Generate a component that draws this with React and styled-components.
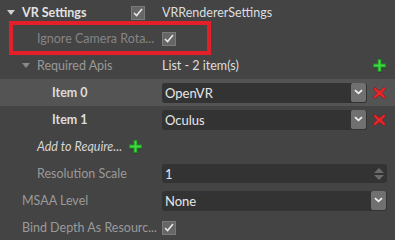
import React from 'react'
import styled, { createGlobalStyle } from 'styled-components'

const GlobalStyle = createGlobalStyle`
  html, body { margin: 0; padding: 0; background: #444444; }
  body { font-family: Lato, "Noto Sans", sans-serif; font-size: 12.5px; }
`

const Panel = styled.div`
  width: 395px;
  height: 240px;
  background: #444444;
  overflow: hidden;
  display: flex;
  flex-direction: column;
`

const Row = styled.div`
  position: relative;
  flex: none;
  height: ${p => p.$h || 27}px;
  display: grid;
  grid-template-columns: 162px 1fr;
  align-items: center;
  background: ${p => (p.$active ? '#545454' : 'transparent')};
`

const Label = styled.div`
  display: flex;
  align-items: center;
  padding-left: ${p => p.$indent}px;
  color: ${p => p.$color || '#9a9a9a'};
  font-weight: ${p => (p.$bold ? 700 : 400)};
  font-style: ${p => (p.$italic ? 'italic' : 'normal')};
  white-space: nowrap;
  gap: 6px;
`

const Caret = styled.span`
  width: 0;
  height: 0;
  border-left: 4px solid transparent;
  border-right: 4px solid transparent;
  border-top: 5px solid ${p => p.$color};
  margin-left: -15px;
  margin-right: 1px;
`

const Value = styled.div`
  display: flex;
  align-items: center;
  padding-right: 8px;
  gap: 5px;
  color: #dedede;
  white-space: nowrap;
`

const Text = styled.span`
  flex: 1;
`

const Field = styled.div`
  flex: 1;
  height: ${p => p.$h || 20}px;
  background: #333333;
  border-radius: 3px;
  display: flex;
  align-items: center;
  padding-left: 3px;
  color: #e6e6e6;
  font-size: 13px;
`

const FieldText = styled.span`
  flex: 1;
`

const DropButton = styled.div`
  width: 15px;
  align-self: stretch;
  margin: 0 1px 1px 0;
  background: #707070;
  border-radius: 2px;
  display: flex;
  align-items: center;
  justify-content: center;
`

const Spinner = styled.div`
  width: 12px;
  display: flex;
  flex-direction: column;
  align-items: center;
  gap: 2px;
  margin-right: 2px;
`

const Arrow = styled.span`
  width: 0;
  height: 0;
  border-left: 5px solid transparent;
  border-right: 5px solid transparent;
  ${p => (p.$up ? 'border-bottom' : 'border-top')}: 5px solid #6a6a6a;
`

const Check = styled.div`
  width: 12px;
  height: 12px;
  background: #666666;
  border: 1px solid #7a7a7a;
  display: flex;
  align-items: center;
  justify-content: center;
`

const HeaderCheck = styled(Check)`
  margin-left: -31px;
  margin-right: 12px;
`

const Highlight = styled.div`
  position: absolute;
  left: 9px;
  top: -4px;
  width: 202px;
  height: 34px;
  box-sizing: border-box;
  border: 4px solid #e3202a;
  pointer-events: none;
`

const Spacer = styled.span`
  flex: 1;
`

const CheckMark = () => (
  <svg width="10" height="9" viewBox="0 0 10 9">
    <path d="M1 5 L3.6 7.6 L9 1" fill="none" stroke="#e8e8e8" strokeWidth="1.6" />
  </svg>
)

const Chevron = () => (
  <svg width="9" height="6" viewBox="0 0 9 6">
    <path d="M1 1.2 L4.5 4.4 L8 1.2" fill="none" stroke="#f0f0f0" strokeWidth="1.8" />
  </svg>
)

const PlusIcon = () => (
  <svg width="15" height="16" viewBox="0 0 15 16">
    <path d="M5 2h5v4h4v5h-4v4h-5v-4h-4v-5h4z" fill="#1d4a1d" opacity="0.6" />
    <path d="M5.5 1h4v4.5h4.5v4h-4.5v4.5h-4v-4.5h-4.5v-4h4.5z" fill="#1f8c24" />
    <path d="M6.5 2h2v4.5h4.5v2h-4.5v4.5h-2v-4.5h-4.5v-2h4.5z" fill="#3fdc40" />
  </svg>
)

const CrossIcon = () => (
  <svg width="15" height="14" viewBox="0 0 15 14">
    <path d="M1 3 L3 1 L7.5 5 L12 1 L14 3 L10 7 L14 11 L12 13 L7.5 9 L3 13 L1 11 L5 7 Z" fill="#8e1010" />
    <path d="M2.5 3 L3 2.3 L7.5 6.2 L12 2.3 L12.6 3 L8.8 7 L12.6 11 L12 11.7 L7.5 7.8 L3 11.7 L2.4 11 L6.2 7 Z" fill="#e8262b" stroke="#e8262b" strokeWidth="1.2" />
  </svg>
)

const items = [
  { name: 'Item 0', value: 'OpenVR', active: true },
  { name: 'Item 1', value: 'Oculus' },
]

export default function App() {
  return (
    <Panel>
      <GlobalStyle />
      <Row $h={25}>
        <Label $indent={22} $bold $color="#e2e2e2">
          <Caret $color="#d0d0d0" />VR Settings
        </Label>
        <Value>
          <HeaderCheck><CheckMark /></HeaderCheck>
          <Text>VRRendererSettings</Text>
        </Value>
      </Row>
      <Row>
        <Highlight />
        <Label $indent={37} $color="#858585">Ignore Camera Rota...</Label>
        <Value><Check><CheckMark /></Check></Value>
      </Row>
      <Row>
        <Label $indent={37} $color="#999999">
          <Caret $color="#8a8a8a" />Required Apis
        </Label>
        <Value>
          <Text>List - 2 item(s)</Text>
          <PlusIcon />
        </Value>
      </Row>
      {items.map(item => (
        <Row key={item.name} $active={item.active}>
          <Label $indent={52} $bold $color="#dcdcdc">{item.name}</Label>
          <Value>
            <Field>
              <FieldText>{item.value}</FieldText>
              <DropButton><Chevron /></DropButton>
            </Field>
            <CrossIcon />
          </Value>
        </Row>
      ))}
      <Row>
        <Label $indent={37} $italic $color="#d6d6d6">
          Add to Require...<PlusIcon />
        </Label>
        <Value />
      </Row>
      <Row>
        <Label $indent={37}>Resolution Scale</Label>
        <Value>
          <Field $h={19}>
            <FieldText>1</FieldText>
            <Spinner><Arrow $up /><Arrow /></Spinner>
          </Field>
        </Value>
      </Row>
      <Row>
        <Label $indent={22}>MSAA Level</Label>
        <Value>
          <Field>
            <FieldText>None</FieldText>
            <DropButton><Chevron /></DropButton>
          </Field>
        </Value>
      </Row>
      <Row>
        <Label $indent={22}>Bind Depth As Resourc...</Label>
        <Value>
          <Check><CheckMark /></Check>
          <Spacer />
        </Value>
      </Row>
    </Panel>
  )
}
